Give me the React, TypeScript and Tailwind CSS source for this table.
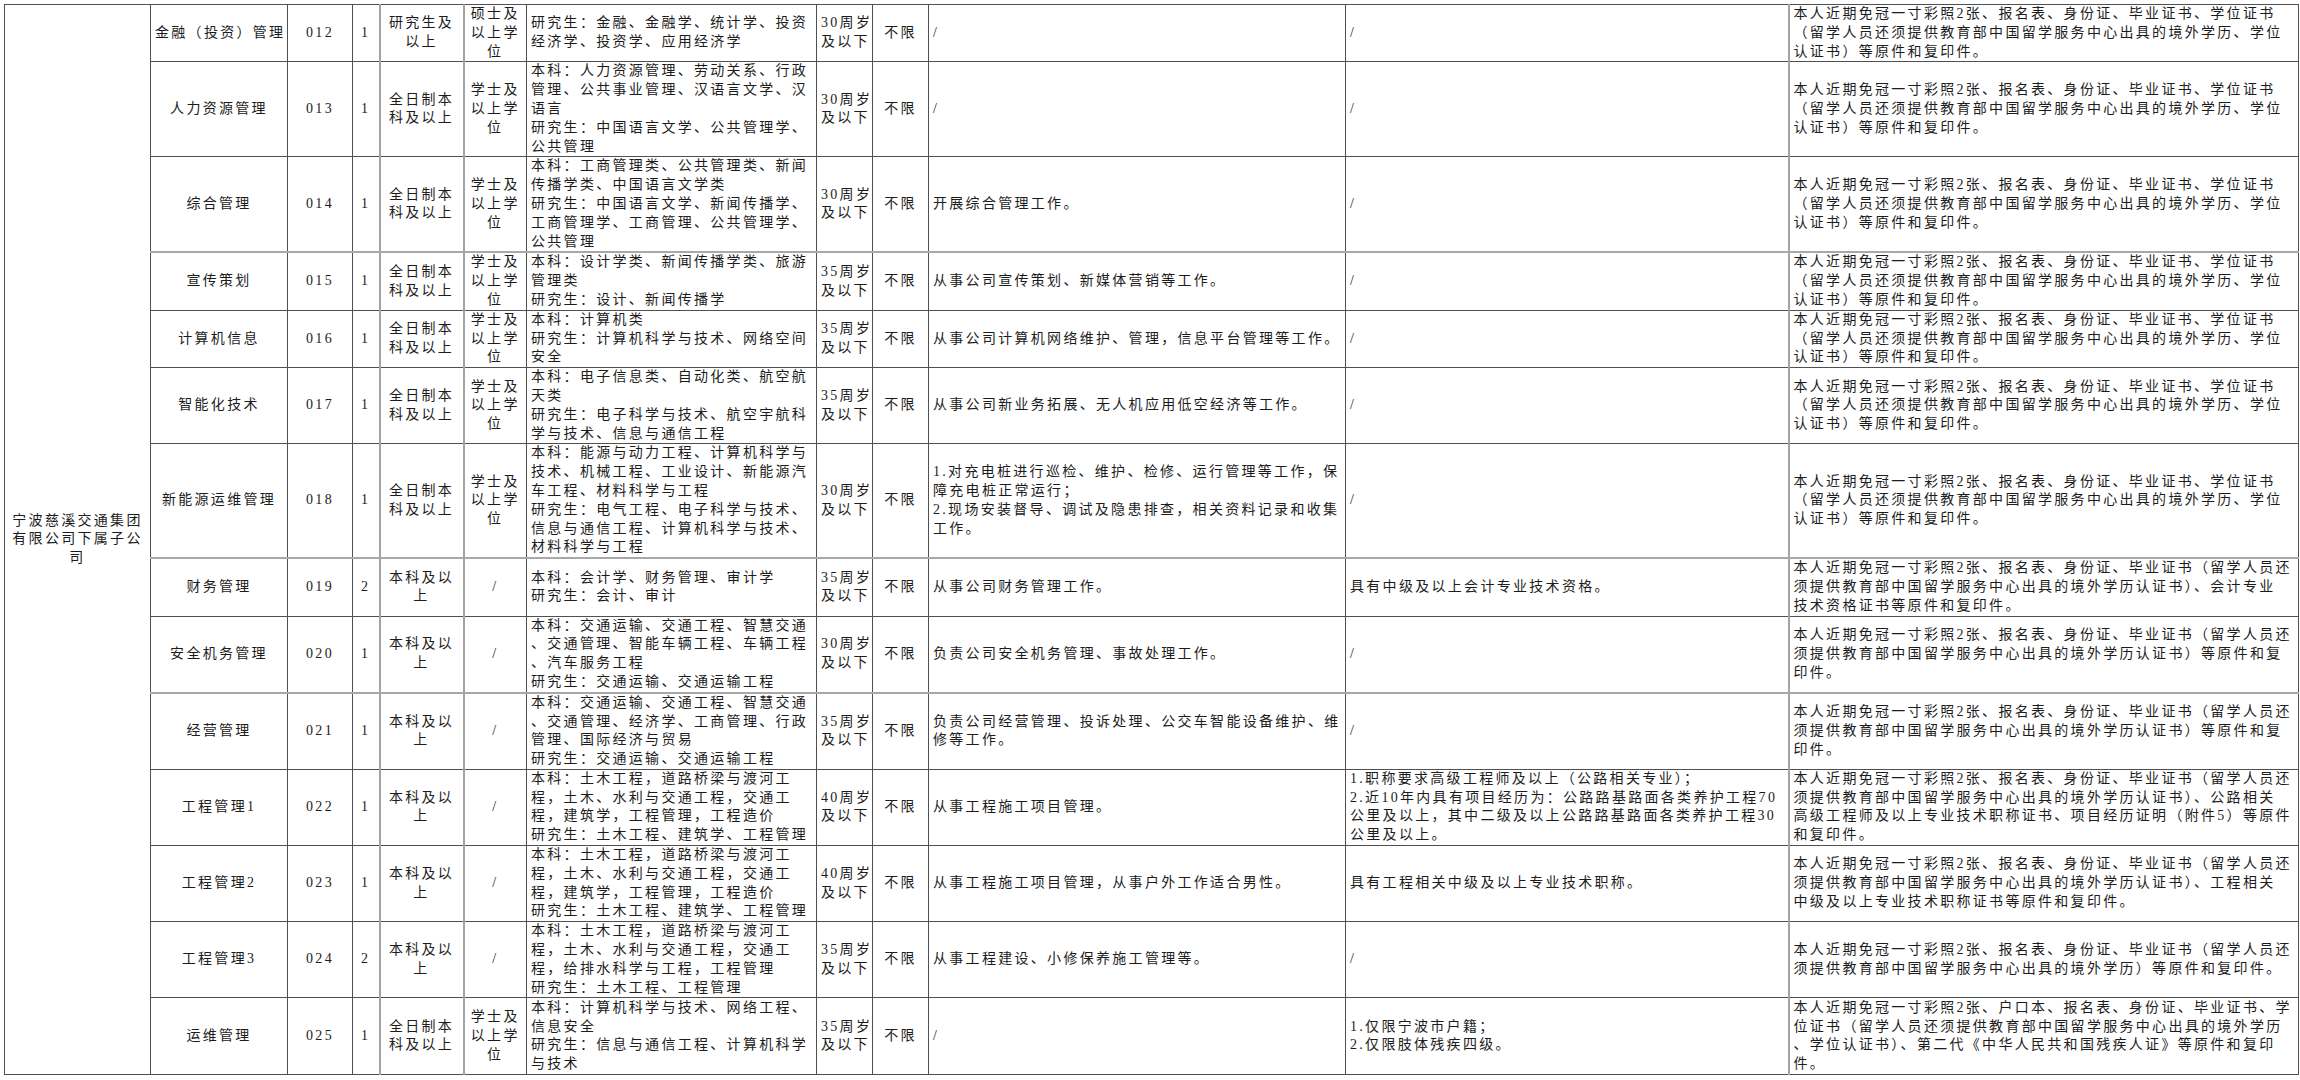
import React from "react";

type Row = {
  name: string;
  code: string;
  num: string;
  edu: string[];
  degree: string[];
  major: string[];
  age: string[];
  duty: string[];
  other: string[];
  docs: string[];
  h: string;
  grayBottom?: boolean;
};

const DOCS_A = [
  "本人近期免冠一寸彩照2张、报名表、身份证、毕业证书、学位证书",
  "（留学人员还须提供教育部中国留学服务中心出具的境外学历、学位",
  "认证书）等原件和复印件。",
];

const DOCS_B = [
  "本人近期免冠一寸彩照2张、报名表、身份证、毕业证书（留学人员还",
  "须提供教育部中国留学服务中心出具的境外学历认证书）等原件和复",
  "印件。",
];

const FULLTIME = ["全日制本", "科及以上"];
const BACHELOR = ["学士及", "以上学", "位"];
const UNDERGRAD = ["本科及以", "上"];

const rows: Row[] = [
  {
    name: "金融（投资）管理",
    code: "012",
    num: "1",
    edu: ["研究生及", "以上"],
    degree: ["硕士及", "以上学", "位"],
    major: ["研究生：金融、金融学、统计学、投资", "经济学、投资学、应用经济学"],
    age: ["30周岁", "及以下"],
    duty: ["/"],
    other: ["/"],
    docs: DOCS_A,
    h: "h-[56px]",
  },
  {
    name: "人力资源管理",
    code: "013",
    num: "1",
    edu: FULLTIME,
    degree: BACHELOR,
    major: [
      "本科：人力资源管理、劳动关系、行政",
      "管理、公共事业管理、汉语言文学、汉",
      "语言",
      "研究生：中国语言文学、公共管理学、",
      "公共管理",
    ],
    age: ["30周岁", "及以下"],
    duty: ["/"],
    other: ["/"],
    docs: DOCS_A,
    h: "h-[95px]",
  },
  {
    name: "综合管理",
    code: "014",
    num: "1",
    edu: FULLTIME,
    degree: BACHELOR,
    major: [
      "本科：工商管理类、公共管理类、新闻",
      "传播学类、中国语言文学类",
      "研究生：中国语言文学、新闻传播学、",
      "工商管理学、工商管理、公共管理学、",
      "公共管理",
    ],
    age: ["30周岁", "及以下"],
    duty: ["开展综合管理工作。"],
    other: ["/"],
    docs: DOCS_A,
    h: "h-[95px]",
    grayBottom: true,
  },
  {
    name: "宣传策划",
    code: "015",
    num: "1",
    edu: FULLTIME,
    degree: BACHELOR,
    major: ["本科：设计学类、新闻传播学类、旅游", "管理类", "研究生：设计、新闻传播学"],
    age: ["35周岁", "及以下"],
    duty: ["从事公司宣传策划、新媒体营销等工作。"],
    other: ["/"],
    docs: DOCS_A,
    h: "h-[56px]",
  },
  {
    name: "计算机信息",
    code: "016",
    num: "1",
    edu: FULLTIME,
    degree: BACHELOR,
    major: ["本科：计算机类", "研究生：计算机科学与技术、网络空间", "安全"],
    age: ["35周岁", "及以下"],
    duty: ["从事公司计算机网络维护、管理，信息平台管理等工作。"],
    other: ["/"],
    docs: DOCS_A,
    h: "h-[56px]",
  },
  {
    name: "智能化技术",
    code: "017",
    num: "1",
    edu: FULLTIME,
    degree: BACHELOR,
    major: [
      "本科：电子信息类、自动化类、航空航",
      "天类",
      "研究生：电子科学与技术、航空宇航科",
      "学与技术、信息与通信工程",
    ],
    age: ["35周岁", "及以下"],
    duty: ["从事公司新业务拓展、无人机应用低空经济等工作。"],
    other: ["/"],
    docs: DOCS_A,
    h: "h-[76px]",
  },
  {
    name: "新能源运维管理",
    code: "018",
    num: "1",
    edu: FULLTIME,
    degree: BACHELOR,
    major: [
      "本科：能源与动力工程、计算机科学与",
      "技术、机械工程、工业设计、新能源汽",
      "车工程、材料科学与工程",
      "研究生：电气工程、电子科学与技术、",
      "信息与通信工程、计算机科学与技术、",
      "材料科学与工程",
    ],
    age: ["30周岁", "及以下"],
    duty: [
      "1.对充电桩进行巡检、维护、检修、运行管理等工作，保",
      "障充电桩正常运行；",
      "2.现场安装督导、调试及隐患排查，相关资料记录和收集",
      "工作。",
    ],
    other: ["/"],
    docs: DOCS_A,
    h: "h-[114px]",
    grayBottom: true,
  },
  {
    name: "财务管理",
    code: "019",
    num: "2",
    edu: UNDERGRAD,
    degree: ["/"],
    major: ["本科：会计学、财务管理、审计学", "研究生：会计、审计"],
    age: ["35周岁", "及以下"],
    duty: ["从事公司财务管理工作。"],
    other: ["具有中级及以上会计专业技术资格。"],
    docs: [
      "本人近期免冠一寸彩照2张、报名表、身份证、毕业证书（留学人员还",
      "须提供教育部中国留学服务中心出具的境外学历认证书）、会计专业",
      "技术资格证书等原件和复印件。",
    ],
    h: "h-[57px]",
  },
  {
    name: "安全机务管理",
    code: "020",
    num: "1",
    edu: UNDERGRAD,
    degree: ["/"],
    major: [
      "本科：交通运输、交通工程、智慧交通",
      "、交通管理、智能车辆工程、车辆工程",
      "、汽车服务工程",
      "研究生：交通运输、交通运输工程",
    ],
    age: ["30周岁", "及以下"],
    duty: ["负责公司安全机务管理、事故处理工作。"],
    other: ["/"],
    docs: DOCS_B,
    h: "h-[75px]",
    grayBottom: true,
  },
  {
    name: "经营管理",
    code: "021",
    num: "1",
    edu: UNDERGRAD,
    degree: ["/"],
    major: [
      "本科：交通运输、交通工程、智慧交通",
      "、交通管理、经济学、工商管理、行政",
      "管理、国际经济与贸易",
      "研究生：交通运输、交通运输工程",
    ],
    age: ["35周岁", "及以下"],
    duty: ["负责公司经营管理、投诉处理、公交车智能设备维护、维", "修等工作。"],
    other: ["/"],
    docs: DOCS_B,
    h: "h-[76px]",
  },
  {
    name: "工程管理1",
    code: "022",
    num: "1",
    edu: UNDERGRAD,
    degree: ["/"],
    major: [
      "本科：土木工程，道路桥梁与渡河工",
      "程，土木、水利与交通工程，交通工",
      "程，建筑学，工程管理，工程造价",
      "研究生：土木工程、建筑学、工程管理",
    ],
    age: ["40周岁", "及以下"],
    duty: ["从事工程施工项目管理。"],
    other: [
      "1.职称要求高级工程师及以上（公路相关专业）；",
      "2.近10年内具有项目经历为：公路路基路面各类养护工程70",
      "公里及以上，其中二级及以上公路路基路面各类养护工程30",
      "公里及以上。",
    ],
    docs: [
      "本人近期免冠一寸彩照2张、报名表、身份证、毕业证书（留学人员还",
      "须提供教育部中国留学服务中心出具的境外学历认证书）、公路相关",
      "高级工程师及以上专业技术职称证书、项目经历证明（附件5）等原件",
      "和复印件。",
    ],
    h: "h-[75px]",
  },
  {
    name: "工程管理2",
    code: "023",
    num: "1",
    edu: UNDERGRAD,
    degree: ["/"],
    major: [
      "本科：土木工程，道路桥梁与渡河工",
      "程，土木、水利与交通工程，交通工",
      "程，建筑学，工程管理，工程造价",
      "研究生：土木工程、建筑学、工程管理",
    ],
    age: ["40周岁", "及以下"],
    duty: ["从事工程施工项目管理，从事户外工作适合男性。"],
    other: ["具有工程相关中级及以上专业技术职称。"],
    docs: [
      "本人近期免冠一寸彩照2张、报名表、身份证、毕业证书（留学人员还",
      "须提供教育部中国留学服务中心出具的境外学历认证书）、工程相关",
      "中级及以上专业技术职称证书等原件和复印件。",
    ],
    h: "h-[76px]",
  },
  {
    name: "工程管理3",
    code: "024",
    num: "2",
    edu: UNDERGRAD,
    degree: ["/"],
    major: [
      "本科：土木工程，道路桥梁与渡河工",
      "程，土木、水利与交通工程，交通工",
      "程，给排水科学与工程，工程管理",
      "研究生：土木工程、工程管理",
    ],
    age: ["35周岁", "及以下"],
    duty: ["从事工程建设、小修保养施工管理等。"],
    other: ["/"],
    docs: [
      "本人近期免冠一寸彩照2张、报名表、身份证、毕业证书（留学人员还",
      "须提供教育部中国留学服务中心出具的境外学历）等原件和复印件。",
    ],
    h: "h-[75px]",
  },
  {
    name: "运维管理",
    code: "025",
    num: "1",
    edu: FULLTIME,
    degree: BACHELOR,
    major: [
      "本科：计算机科学与技术、网络工程、",
      "信息安全",
      "研究生：信息与通信工程、计算机科学",
      "与技术",
    ],
    age: ["35周岁", "及以下"],
    duty: ["/"],
    other: ["1.仅限宁波市户籍；", "2.仅限肢体残疾四级。"],
    docs: [
      "本人近期免冠一寸彩照2张、户口本、报名表、身份证、毕业证书、学",
      "位证书（留学人员还须提供教育部中国留学服务中心出具的境外学历",
      "、学位认证书）、第二代《中华人民共和国残疾人证》等原件和复印",
      "件。",
    ],
    h: "h-[77px]",
  },
];

// fixed-height lines: mixed serif/CJK fallback would otherwise grow each line box
const Lines = ({ lines }: { lines: string[] }) => (
  <>
    {lines.map((l, i) => (
      <div key={i} className="h-[18.8px] whitespace-nowrap">
        {l}
      </div>
    ))}
  </>
);

const cell = "border border-[#505050] px-[4px] py-0 align-middle leading-[18.8px]";
const grayV = "border-l-2 border-l-[#a3a3a3]";

export default function App() {
  return (
    <div className="min-h-screen w-full bg-white pt-[4px] pl-[4px] text-[#1c1c1c]">
      <table className="table-fixed border-collapse w-[2294px] font-['Liberation_Serif','Noto_Sans_CJK_SC',serif] text-[14px] tracking-[2.3px]">
        <colgroup>
          <col className="w-[146px]" />
          <col className="w-[137px]" />
          <col className="w-[65px]" />
          <col className="w-[27px]" />
          <col className="w-[84px]" />
          <col className="w-[63px]" />
          <col className="w-[290px]" />
          <col className="w-[56px]" />
          <col className="w-[56px]" />
          <col className="w-[417px]" />
          <col className="w-[443px]" />
          <col className="w-[510px]" />
        </colgroup>
        <tbody>
          {rows.map((r, i) => {
            const gb = r.grayBottom ? "border-b-2 border-b-[#a8a8a8]" : "";
            return (
              <tr key={r.code} className={r.h}>
                {i === 0 && (
                  <td rowSpan={rows.length} className={`${cell} text-center`}>
                    <Lines lines={["宁波慈溪交通集团", "有限公司下属子公", "司"]} />
                  </td>
                )}
                <td className={`${cell} ${gb} text-center px-0 whitespace-nowrap`}>
                  <Lines lines={[r.name]} />
                </td>
                <td className={`${cell} ${gb} text-center`}>
                  <Lines lines={[r.code]} />
                </td>
                <td className={`${cell} ${gb} text-center px-0`}>
                  <Lines lines={[r.num]} />
                </td>
                <td className={`${cell} ${gb} ${grayV} border-r-2 border-r-[#a3a3a3] text-center`}>
                  <Lines lines={r.edu} />
                </td>
                <td className={`${cell} ${gb} text-center`}>
                  <Lines lines={r.degree} />
                </td>
                <td className={`${cell} ${gb} text-left`}>
                  <Lines lines={r.major} />
                </td>
                <td className={`${cell} ${gb} text-left px-[3px]`}>
                  <Lines lines={r.age} />
                </td>
                <td className={`${cell} ${gb} text-center`}>
                  <Lines lines={["不限"]} />
                </td>
                <td className={`${cell} ${gb} text-left`}>
                  <Lines lines={r.duty} />
                </td>
                <td className={`${cell} ${gb} text-left`}>
                  <Lines lines={r.other} />
                </td>
                <td className={`${cell} ${gb} ${grayV} text-left`}>
                  <Lines lines={r.docs} />
                </td>
              </tr>
            );
          })}
        </tbody>
      </table>
    </div>
  );
}
